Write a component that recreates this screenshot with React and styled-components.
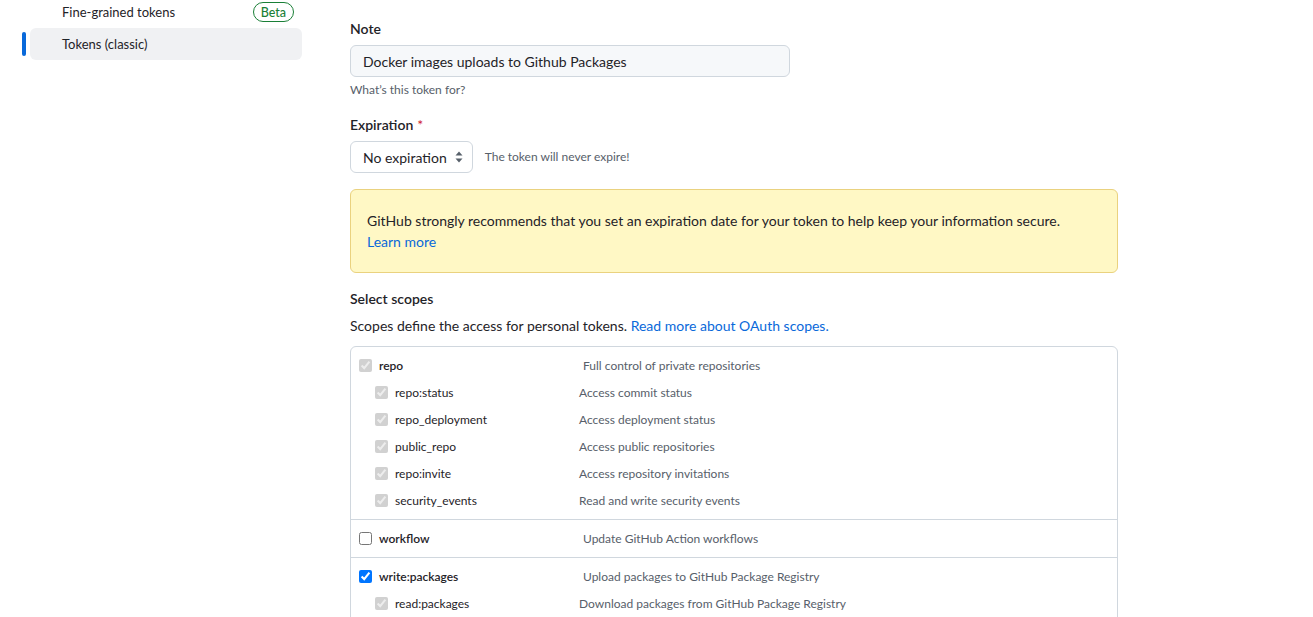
import React from 'react';
import styled, { createGlobalStyle } from 'styled-components';

const GlobalStyle = createGlobalStyle`
  body {
    margin: 0;
    background: #ffffff;
    color: #1f2328;
    font-family: Lato, 'Noto Sans', sans-serif;
    overflow: hidden;
  }
`;

const Page = styled.div`
  display: flex;
  gap: 48px;
  padding-left: 22px;
  height: 617px;
  overflow: hidden;
`;

const Sidebar = styled.nav`
  flex: 0 0 280px;
  margin-top: -4px;
`;

const NavList = styled.ul`
  list-style: none;
  margin: 0;
  padding: 0;
`;

const NavItem = styled.li`
  position: relative;
  display: flex;
  align-items: center;
  justify-content: space-between;
  height: 32px;
  margin-left: 8px;
  padding: 0 8px 0 32px;
  border-radius: 6px;
  font-size: 13px;
  color: #1f2328;
  background: ${(p) => (p.$active ? '#f0f1f3' : 'transparent')};

  ${(p) =>
    p.$active &&
    `
    &::after {
      content: '';
      position: absolute;
      left: -8px;
      top: 4px;
      width: 4px;
      height: 24px;
      border-radius: 6px;
      background: #0969da;
    }
  `}
`;

const Badge = styled.span`
  display: inline-flex;
  align-items: center;
  height: 18px;
  padding: 0 7px;
  border: 1px solid #1a7f37;
  border-radius: 2em;
  color: #1a7f37;
  font-size: 12.5px;
  font-weight: 500;
`;

const Main = styled.main`
  flex: 0 0 768px;
  padding-top: 19px;
`;

const Label = styled.div`
  font-size: 14px;
  font-weight: 600;
  line-height: 20px;
  color: #1f2328;
  margin-top: ${(p) => p.$top || 0}px;
`;

const Required = styled.span`
  color: #cf222e;
  margin-left: 4px;
  font-weight: 400;
`;

const TextInput = styled.div`
  margin-top: 6px;
  width: 440px;
  height: 32px;
  box-sizing: border-box;
  display: flex;
  align-items: center;
  padding: 0 12px;
  background: #f6f8fa;
  border: 1px solid #d0d7de;
  border-radius: 6px;
  font-size: 14px;
  color: #1f2328;
`;

const Hint = styled.div`
  margin-top: ${(p) => (p.$inline ? 0 : 4)}px;
  font-size: 12px;
  line-height: 18px;
  color: #57606a;
`;

const SelectRow = styled.div`
  margin-top: 6px;
  display: flex;
  align-items: center;
  gap: 12px;
`;

const Select = styled.div`
  height: 32px;
  box-sizing: border-box;
  display: flex;
  align-items: center;
  gap: 8px;
  padding: 0 9px 0 12px;
  border: 1px solid #d0d7de;
  border-radius: 6px;
  background: #ffffff;
  font-size: 14px;
  color: #1f2328;
`;

const Flash = styled.div`
  margin-top: 16px;
  padding: 20px 16px;
  background: #fff8c5;
  border: 1px solid #ead27f;
  border-radius: 6px;
  font-size: 14px;
  line-height: 21px;
  color: #1f2328;
`;

const Link = styled.a`
  color: #0969da;
  text-decoration: none;
`;

const Text = styled.p`
  margin: 7px 0 0;
  font-size: 14px;
  line-height: 20px;
  color: #1f2328;
`;

const ScopeBox = styled.div`
  margin-top: 10px;
  border: 1px solid #d0d7de;
  border-radius: 6px;
`;

const Group = styled.div`
  padding: 5px 0;
  & + & {
    border-top: 1px solid #d0d7de;
  }
`;

const Row = styled.div`
  display: flex;
  align-items: center;
  height: 27px;
  padding-left: ${(p) => (p.$child ? 24 : 8)}px;
  font-size: 12px;
`;

const Check = styled.input`
  margin: 0 7px 0 0;
  width: 13px;
  height: 13px;
  flex: 0 0 13px;
`;

const ScopeName = styled.span`
  flex: 0 0 ${(p) => (p.$child ? 184 : 204)}px;
  font-weight: ${(p) => (p.$child ? 400 : 600)};
  color: #1f2328;
`;

const ScopeDesc = styled.span`
  color: #57606a;
`;

const UpDown = () => (
  <svg width="8" height="12" viewBox="0 0 8 12" fill="#57606a">
    <path d="M4 0.5 L7.5 4.5 H0.5 Z" />
    <path d="M4 11.5 L7.5 7.5 H0.5 Z" />
  </svg>
);

const groups = [
  [
    { name: 'repo', desc: 'Full control of private repositories', checked: true, disabled: true },
    { name: 'repo:status', desc: 'Access commit status', child: true },
    { name: 'repo_deployment', desc: 'Access deployment status', child: true },
    { name: 'public_repo', desc: 'Access public repositories', child: true },
    { name: 'repo:invite', desc: 'Access repository invitations', child: true },
    { name: 'security_events', desc: 'Read and write security events', child: true },
  ],
  [{ name: 'workflow', desc: 'Update GitHub Action workflows' }],
  [
    { name: 'write:packages', desc: 'Upload packages to GitHub Package Registry', checked: true },
    { name: 'read:packages', desc: 'Download packages from GitHub Package Registry', child: true },
  ],
];

export default function App() {
  return (
    <>
      <GlobalStyle />
      <Page>
        <Sidebar>
          <NavList>
            <NavItem>
              Fine-grained tokens
              <Badge>Beta</Badge>
            </NavItem>
            <NavItem $active>Tokens (classic)</NavItem>
          </NavList>
        </Sidebar>
        <Main>
          <Label>Note</Label>
          <TextInput>Docker images uploads to Github Packages</TextInput>
          <Hint>What’s this token for?</Hint>

          <Label $top={16}>
            Expiration<Required>*</Required>
          </Label>
          <SelectRow>
            <Select>
              No expiration
              <UpDown />
            </Select>
            <Hint $inline>The token will never expire!</Hint>
          </SelectRow>

          <Flash>
            GitHub strongly recommends that you set an expiration date for your token to help keep your
            information secure.
            <br />
            <Link href="#">Learn more</Link>
          </Flash>

          <Label $top={16}>Select scopes</Label>
          <Text>
            Scopes define the access for personal tokens.{' '}
            <Link href="#">Read more about OAuth scopes.</Link>
          </Text>

          <ScopeBox>
            {groups.map((g, i) => (
              <Group key={i}>
                {g.map((s) => (
                  <Row key={s.name} $child={s.child}>
                    <Check
                      type="checkbox"
                      readOnly
                      checked={s.child || !!s.checked}
                      disabled={s.child || s.disabled}
                    />
                    <ScopeName $child={s.child}>{s.name}</ScopeName>
                    <ScopeDesc>{s.desc}</ScopeDesc>
                  </Row>
                ))}
              </Group>
            ))}
          </ScopeBox>
        </Main>
      </Page>
    </>
  );
}
